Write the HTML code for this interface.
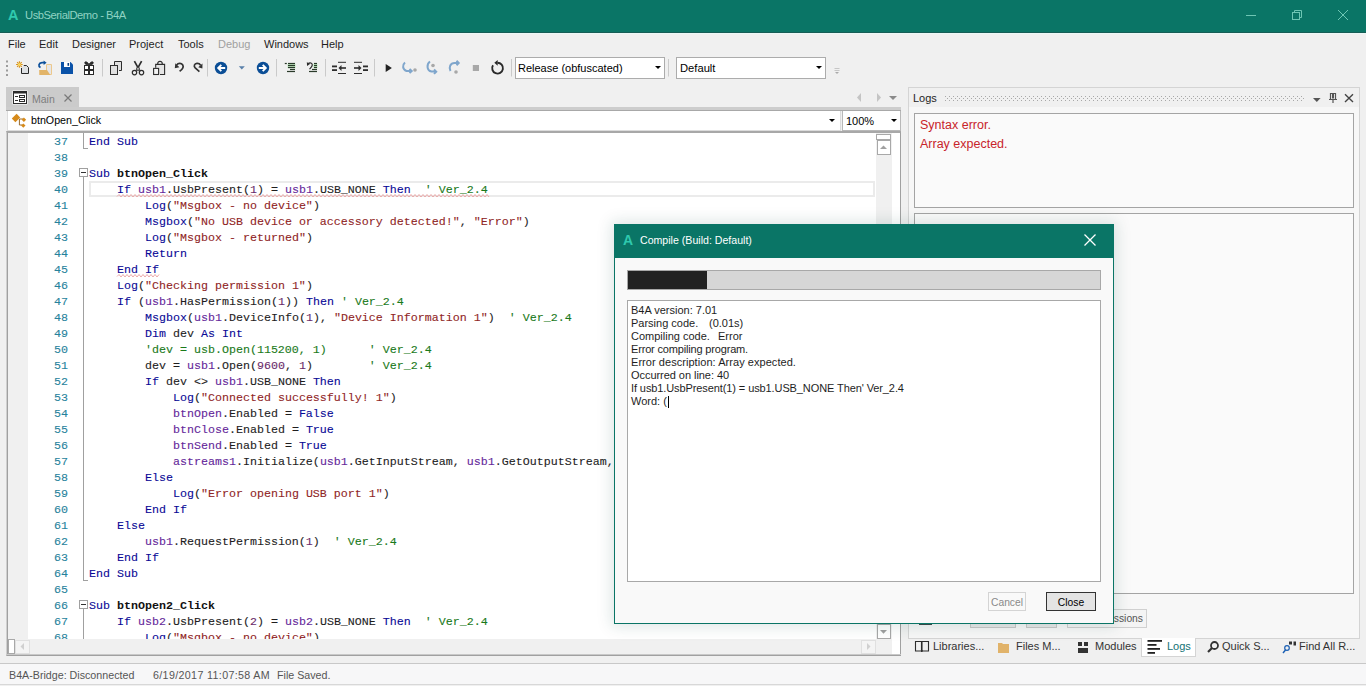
<!DOCTYPE html>
<html><head><meta charset="utf-8">
<style>
*{box-sizing:border-box;margin:0;padding:0}
html,body{width:1366px;height:686px;overflow:hidden;background:#f0f0f0;font-family:"Liberation Sans",sans-serif;font-size:11px;color:#1e1e1e}
.a{position:absolute;white-space:nowrap}
svg{position:absolute;overflow:visible}
.code{font-family:"Liberation Mono",monospace;font-size:11.67px;line-height:16px;white-space:pre;-webkit-text-stroke:0.1px}
.ln{position:absolute;left:28px;width:40px;text-align:right;color:#26829c}
.cl{position:absolute;left:89px}
.code i{font-style:normal}
.code b{font-weight:bold;color:#111;-webkit-text-stroke:0}
.k{color:#0a0a96}
.s{color:#902626}
.c{color:#1a7a1a}
.v{color:#64289a}
.n{color:#6a2a6a}
.menu{position:absolute;top:38px;font-size:11px;color:#1e1e1e}
.sep{position:absolute;width:1px;background:#c8c8c8}
.btab{position:absolute;top:640px;font-size:11px;color:#333}
.dl{position:absolute;left:631px;font-size:11px;line-height:13px;color:#1e1e1e;white-space:pre}
</style></head><body>
<!-- title bar -->
<div class="a" style="left:0;top:0;width:1366px;height:32px;background:#0a7566"></div><div class="a" style="left:0;top:32px;width:1366px;height:1px;background:#175d56"></div><div class="a" style="left:0;top:33px;width:1366px;height:1px;background:#ecf8f6"></div>
<div class="a" style="left:8px;top:7px;font-size:14.5px;font-weight:bold;color:#2fc9ae">A</div>
<div class="a" style="left:25px;top:9px;color:#8fd3c3;font-size:11.2px;letter-spacing:-0.45px">UsbSerialDemo - B4A</div>
<svg style="left:0;top:0" width="1366" height="33" viewBox="0 0 1366 33">
<g stroke="#6ec6b4" stroke-width="1" fill="none">
<path d="M1246 15.5h10"/>
<rect x="1292.5" y="12.5" width="7" height="7"/>
<path d="M1294.5 12.5v-2h7v7h-2"/>
<path d="M1338 10l10 10M1348 10l-10 10"/>
</g></svg>

<!-- menu -->
<div class="menu" style="left:8px">File</div>
<div class="menu" style="left:39px">Edit</div>
<div class="menu" style="left:72px">Designer</div>
<div class="menu" style="left:129px">Project</div>
<div class="menu" style="left:178px">Tools</div>
<div class="menu" style="left:218px;color:#a0a0a0">Debug</div>
<div class="menu" style="left:264px">Windows</div>
<div class="menu" style="left:321px">Help</div>

<!-- toolbar icons -->
<svg style="left:0;top:56px" width="900" height="26" viewBox="0 56 900 26">
<g fill="#9c9c9c"><rect x="6" y="60.5" width="2" height="2"/><rect x="6" y="65" width="2" height="2"/><rect x="6" y="69.5" width="2" height="2"/><rect x="6" y="74" width="2" height="2"/></g>
<!-- new -->
<g stroke="#d8901a" stroke-width="1.1"><path d="M19.4 61.2v6.6M16.1 64.5h6.6M17.1 62.2l4.6 4.6M21.7 62.2l-4.6 4.6"/></g>
<circle cx="19.4" cy="64.5" r="1.5" fill="#f8d860"/>
<path d="M23.8 65.5h2.7l2 2v6h-7v-5.5" fill="#dde0e3" stroke="#2a2a2a" stroke-width="1"/>
<path d="M22 68.5h2.5v-2.5" fill="none" stroke="#f0f0f0" stroke-width="0"/>
<!-- open -->
<path d="M46.5 64.5h5v10h-5z" fill="#e6e6e8" stroke="#ecc88c" stroke-width="1"/>
<path d="M39.2 70h7.8l3.3 5h-11z" fill="#e2b468"/>
<path d="M40.5 67.6c-2.5-1.5-2-4.6 1.5-4.9h2.2" stroke="#0b4f9a" stroke-width="1.7" fill="none"/>
<path d="M43.6 60.4l3 2.3-3 2.3z" fill="#0b4f9a"/>
<!-- save -->
<path d="M61 62h9.5l2.5 2.5v9.5h-12z" fill="#0a52a8"/>
<rect x="64" y="62" width="6" height="5" fill="#fff"/>
<rect x="67.5" y="63" width="1.6" height="2.8" fill="#0a3f80"/>
<!-- save all (gift) -->
<rect x="84" y="65" width="10" height="10" fill="#2a2a2a"/>
<g fill="#fff"><rect x="85" y="66" width="3" height="3"/><rect x="90" y="66" width="3" height="3"/><rect x="85" y="71" width="3" height="3"/><rect x="90" y="71" width="3" height="3"/></g>
<path d="M89 64.5c-1-2-2.5-3-3.8-2.6c-0.8 0.4-0.5 1.8 0.8 2.6zM89 64.5c1-2 2.5-3 3.8-2.6c0.8 0.4 0.5 1.8-0.8 2.6z" fill="#2a2a2a" stroke="#2a2a2a" stroke-width="0.8"/>
<rect x="102" y="59" width="1" height="17.5" fill="#cacaca"/>
<!-- copy -->
<path d="M114.5 65v-3.5h7v9h-2.5" fill="#e0e0e0" stroke="#2d2d2d" stroke-width="1"/>
<rect x="110.5" y="65.5" width="7" height="9" fill="#e0e0e0" stroke="#2d2d2d" stroke-width="1"/>
<!-- cut -->
<path d="M134.4 61.2L138 67.6M141.6 61.2L138 67.6" stroke="#2d2d2d" stroke-width="1.7" fill="none"/>
<path d="M136.8 67.6v3.2M139.2 67.6v3.2M135.5 70.3h5" stroke="#2d2d2d" stroke-width="1.1" fill="none"/>
<circle cx="134.5" cy="72.6" r="2.2" fill="none" stroke="#2d2d2d" stroke-width="1.2"/>
<circle cx="141.5" cy="72.6" r="2.2" fill="none" stroke="#2d2d2d" stroke-width="1.2"/>
<!-- paste -->
<path d="M155.7 67.8V64.4H164.6V74.5H160" fill="#e4e4e4" stroke="#2d2d2d" stroke-width="1.1"/>
<path d="M157.6 64.4c0-2 1-3 2.4-3s2.4 1 2.4 3z" fill="#fff" stroke="#2d2d2d" stroke-width="1.1"/>
<rect x="153.6" y="68.4" width="5" height="6.1" fill="#f4f4f4" stroke="#2d2d2d" stroke-width="1.1"/>
<!-- undo/redo -->
<path d="M179.6 71.3C182.2 69.6 184 67 182.6 64.8C181.2 62.7 178.2 62.9 176.6 65" stroke="#333" stroke-width="1.7" fill="none"/>
<path d="M174.8 68.3L175.3 63.3L179.4 67.3z" fill="#333"/>
<path d="M199.4 71.7L195.2 67.9C193.4 66 194.4 63.6 197 63.4C198.8 63.3 200 64.2 200.6 65.2" stroke="#333" stroke-width="1.7" fill="none"/>
<path d="M202.4 68.5L202.5 63.4L198.2 67.2z" fill="#333"/>
<rect x="207" y="59" width="1" height="17.5" fill="#cacaca"/>
<!-- back/fwd -->
<circle cx="221" cy="68" r="6.2" fill="#0b4e96"/>
<path d="M225.2 68h-6M221.3 64.9l-3.1 3.1 3.1 3.1" stroke="#fff" stroke-width="1.9" fill="none"/>
<path d="M238.8 66.2h6l-3 3.3z" fill="#5a80aa"/>
<circle cx="263" cy="68" r="6.2" fill="#0b4e96"/>
<path d="M258.8 68h6M262.7 64.9l3.1 3.1-3.1 3.1" stroke="#fff" stroke-width="1.9" fill="none"/>
<rect x="276" y="59" width="1" height="17.5" fill="#cacaca"/>
<!-- comment -->
<rect x="287.5" y="63.8" width="8" height="4.4" fill="#c4ecc4"/>
<g fill="#2a3a2a"><rect x="284.8" y="62.9" width="2" height="1.2"/><rect x="288" y="62.9" width="7" height="1.2"/><rect x="288" y="64.9" width="7" height="1.2"/><rect x="288" y="66.9" width="7" height="1.2"/><rect x="290" y="68.9" width="5" height="1.2"/><rect x="287" y="70.9" width="8" height="1.2"/></g>
<!-- uncomment -->
<rect x="313.3" y="63.8" width="4.2" height="4.4" fill="#c4ecc4"/>
<path d="M308.5 63.2c1.5-0.7 3.8-0.4 3.8 1.8c0 1.5-1.5 2.8-2.8 4.2" stroke="#2a2a2a" stroke-width="1.2" fill="none"/>
<path d="M306.8 62.2l0.3 3.8 3.2-2.2z" fill="#2a2a2a"/>
<g fill="#2a3a2a"><rect x="314" y="62.9" width="3" height="1.2"/><rect x="314" y="64.9" width="3" height="1.2"/><rect x="314" y="66.9" width="3" height="1.2"/><rect x="312" y="68.9" width="5" height="1.2"/><rect x="309" y="70.9" width="8" height="1.2"/></g>
<rect x="325" y="59" width="1" height="17.5" fill="#cacaca"/>
<!-- outdent/indent -->
<g fill="#2d2d2d">
<rect x="338" y="61.8" width="8" height="1"/><rect x="332" y="65.5" width="5" height="1.8"/><rect x="332" y="69.2" width="5" height="1.8"/><rect x="338" y="73" width="8" height="1"/>
<rect x="340" y="67.2" width="6" height="1.6"/><path d="M338.5 68l3-3v6z"/>
<rect x="354" y="61.8" width="8" height="1"/><rect x="363" y="65.5" width="5" height="1.8"/><rect x="363" y="69.2" width="5" height="1.8"/><rect x="354" y="73" width="8" height="1"/>
<rect x="354" y="67.2" width="6" height="1.6"/><path d="M361.5 68l-3-3v6z"/>
</g>
<rect x="374" y="59" width="1" height="17.5" fill="#cacaca"/>
<!-- play -->
<path d="M385.7 64v8l6.2-4z" fill="#222"/>
<!-- steps -->
<g stroke="#7fa6cc" stroke-width="2" fill="none">
<path d="M405 62.5c-3 2.5-2.5 7 1.5 8.5h4"/><path d="M409.5 69l2.2 2-2.2 2"/>
<path d="M430 61.5c-3.5 2.5-3.5 9 1.5 10h4"/><path d="M434 69.5l2.2 2.2-2.2 2.2"/>
<path d="M450.5 71c-2-4 0-8 4-8h4"/><path d="M456.5 60.8l2.2 2.2-2.2 2.2"/>
</g>
<g fill="#a8a8a8"><circle cx="415" cy="70" r="1.8"/><circle cx="433" cy="65.5" r="1.8"/><circle cx="456" cy="72" r="1.8"/></g>
<rect x="472.8" y="65" width="6.2" height="6" fill="#a8a8a8"/>
<!-- refresh -->
<path d="M497.5 62.8A5.4 5.4 0 1 1 493 65.3" stroke="#2a2a2a" stroke-width="1.9" fill="none"/>
<path d="M494.3 62.8l3.4-2.9v5.8z" fill="#2a2a2a"/>
<rect x="511" y="59" width="1" height="17.5" fill="#cacaca"/>
<rect x="668" y="59" width="1" height="17.5" fill="#cacaca"/>
<path d="M834.5 68.5h5M834.5 70.5h5" stroke="#bbb" stroke-width="0.8"/><path d="M835 72l2 2 2-2z" fill="#aaa"/>
</svg>
<!-- combos -->
<div class="a" style="left:515px;top:57px;width:150px;height:22px;background:#fff;border:1px solid #acacac"></div>
<div class="a" style="left:518px;top:62px;font-size:11px;color:#000">Release (obfuscated)</div>
<svg style="left:655px;top:66px" width="8" height="5"><path d="M0 0h6l-3 3z" fill="#000"/></svg>
<div class="a" style="left:676px;top:57px;width:150px;height:22px;background:#fff;border:1px solid #acacac"></div>
<div class="a" style="left:680px;top:62px;font-size:11.2px;color:#000">Default</div>
<svg style="left:816px;top:66px" width="8" height="5"><path d="M0 0h6l-3 3z" fill="#000"/></svg>
<!-- doc tab row -->
<div class="a" style="left:6px;top:87px;width:73px;height:21px;background:#cbcbcb"></div>
<svg style="left:12px;top:90px" width="17" height="16" viewBox="0 0 17 16">
<rect x="0.5" y="0.5" width="15" height="14" fill="#fff"/>
<rect x="1.5" y="1.5" width="13" height="12" fill="#fff" stroke="#2d2d2d" stroke-width="1"/>
<rect x="1.5" y="1.5" width="13" height="2" fill="#2d2d2d"/>
<g fill="#2d2d2d"><rect x="3" y="6" width="3" height="1"/><rect x="3" y="10" width="3" height="1"/></g>
<g fill="none" stroke="#2d2d2d" stroke-width="1"><rect x="7.5" y="5.5" width="5" height="2"/><rect x="7.5" y="9.5" width="5" height="2"/></g>
</svg>
<div class="a" style="left:32px;top:93px;font-size:10.5px;color:#7e7e7e">Main</div>
<svg style="left:64px;top:94px" width="9" height="9"><path d="M0.5 0.5l7 7M7.5 0.5l-7 7" stroke="#7a7a7a" stroke-width="1.2"/></svg>
<svg style="left:855px;top:92px" width="45" height="12">
<path d="M6 1v9l-4-4.5z" fill="#c4c4c4"/><path d="M22 1v9l4-4.5z" fill="#c4c4c4"/><path d="M34 4h8l-4 4z" fill="#8a8a8a"/>
</svg>
<div class="a" style="left:6px;top:107px;width:895px;height:3px;background:#cdcdcd"></div><div class="a" style="left:6px;top:110px;width:895px;height:1px;background:#a8a8a8"></div>
<!-- dropdowns -->
<div class="a" style="left:7px;top:111px;width:834px;height:20px;background:#fff;border:1px solid #dcdcdc;border-top:none"></div>
<svg style="left:8px;top:110px" width="22" height="21" viewBox="8 110 22 21">
<path d="M19.4 119h4M19.4 119v6h3" stroke="#9a6a2a" stroke-width="1" fill="none"/>
<path d="M11.8 118.6L16.6 113.8L20.2 117.4L15.4 122.2z" fill="#d68a1a"/>
<path d="M23.9 117.6l2.2 2.2-2.2 2.2-2.2-2.2z" fill="#d68a1a"/>
<path d="M23.3 123.4l2.2 2.2-2.2 2.2-2.2-2.2z" fill="#d68a1a"/>
</svg>
<div class="a" style="left:31px;top:114px;font-size:10.7px;color:#000">btnOpen_Click</div>
<svg style="left:829px;top:119px" width="8" height="5"><path d="M0 0h6l-3 3z" fill="#000"/></svg>
<div class="a" style="left:842px;top:111px;width:59px;height:20px;background:#fff;border:1px solid #b8b8b8;border-top:none"></div>
<div class="a" style="left:846px;top:115px;font-size:11px;color:#000">100%</div>
<svg style="left:891px;top:119px" width="8" height="5"><path d="M0 0h6l-3 3z" fill="#000"/></svg>

<!-- code area frame -->
<div class="a" style="left:6px;top:131px;width:895px;height:525px;background:#fff;border-top:2px solid #a8a8a8;border-left:1px solid #cfcfcf;border-right:1px solid #a0a0a0;border-bottom:1px solid #a0a0a0"></div><div class="a" style="left:7px;top:133px;width:1px;height:522px;background:#a0a0a0"></div><div class="a" style="left:6px;top:654px;width:895px;height:1px;background:#c8c8c8"></div>
<div class="a" style="left:8px;top:133px;width:20px;height:506px;background:#f0f0f0"></div>
<!-- current line box -->
<div class="a" style="left:89px;top:181px;width:786px;height:16px;border:2px solid #ebebeb"></div>
<!-- fold lines -->
<div class="a" style="left:83px;top:133px;width:1px;height:16px;background:#a0a0a0"></div>
<div class="a" style="left:83px;top:148px;width:5px;height:1px;background:#a0a0a0"></div>
<div class="a" style="left:79px;top:168px;width:9px;height:9px;border:1px solid #a0a0a0;background:#fff"></div>
<div class="a" style="left:81px;top:172px;width:5px;height:1px;background:#333"></div>
<div class="a" style="left:83px;top:177px;width:1px;height:404px;background:#a0a0a0"></div>
<div class="a" style="left:83px;top:580px;width:5px;height:1px;background:#a0a0a0"></div>
<div class="a" style="left:79px;top:600px;width:9px;height:9px;border:1px solid #a0a0a0;background:#fff"></div>
<div class="a" style="left:81px;top:604px;width:5px;height:1px;background:#333"></div>
<div class="a" style="left:83px;top:609px;width:1px;height:30px;background:#a0a0a0"></div>
<!-- squiggles -->
<svg style="left:117px;top:194px" width="372" height="4"><path d="M0 2.5 L2.0 0.5 L4.0 3.0 L6.0 0.5 L8.0 3.0 L10.0 0.5 L12.0 3.0 L14.0 0.5 L16.0 3.0 L18.0 0.5 L20.0 3.0 L22.0 0.5 L24.0 3.0 L26.0 0.5 L28.0 3.0 L30.0 0.5 L32.0 3.0 L34.0 0.5 L36.0 3.0 L38.0 0.5 L40.0 3.0 L42.0 0.5 L44.0 3.0 L46.0 0.5 L48.0 3.0 L50.0 0.5 L52.0 3.0 L54.0 0.5 L56.0 3.0 L58.0 0.5 L60.0 3.0 L62.0 0.5 L64.0 3.0 L66.0 0.5 L68.0 3.0 L70.0 0.5 L72.0 3.0 L74.0 0.5 L76.0 3.0 L78.0 0.5 L80.0 3.0 L82.0 0.5 L84.0 3.0 L86.0 0.5 L88.0 3.0 L90.0 0.5 L92.0 3.0 L94.0 0.5 L96.0 3.0 L98.0 0.5 L100.0 3.0 L102.0 0.5 L104.0 3.0 L106.0 0.5 L108.0 3.0 L110.0 0.5 L112.0 3.0 L114.0 0.5 L116.0 3.0 L118.0 0.5 L120.0 3.0 L122.0 0.5 L124.0 3.0 L126.0 0.5 L128.0 3.0 L130.0 0.5 L132.0 3.0 L134.0 0.5 L136.0 3.0 L138.0 0.5 L140.0 3.0 L142.0 0.5 L144.0 3.0 L146.0 0.5 L148.0 3.0 L150.0 0.5 L152.0 3.0 L154.0 0.5 L156.0 3.0 L158.0 0.5 L160.0 3.0 L162.0 0.5 L164.0 3.0 L166.0 0.5 L168.0 3.0 L170.0 0.5 L172.0 3.0 L174.0 0.5 L176.0 3.0 L178.0 0.5 L180.0 3.0 L182.0 0.5 L184.0 3.0 L186.0 0.5 L188.0 3.0 L190.0 0.5 L192.0 3.0 L194.0 0.5 L196.0 3.0 L198.0 0.5 L200.0 3.0 L202.0 0.5 L204.0 3.0 L206.0 0.5 L208.0 3.0 L210.0 0.5 L212.0 3.0 L214.0 0.5 L216.0 3.0 L218.0 0.5 L220.0 3.0 L222.0 0.5 L224.0 3.0 L226.0 0.5 L228.0 3.0 L230.0 0.5 L232.0 3.0 L234.0 0.5 L236.0 3.0 L238.0 0.5 L240.0 3.0 L242.0 0.5 L244.0 3.0 L246.0 0.5 L248.0 3.0 L250.0 0.5 L252.0 3.0 L254.0 0.5 L256.0 3.0 L258.0 0.5 L260.0 3.0 L262.0 0.5 L264.0 3.0 L266.0 0.5 L268.0 3.0 L270.0 0.5 L272.0 3.0 L274.0 0.5 L276.0 3.0 L278.0 0.5 L280.0 3.0 L282.0 0.5 L284.0 3.0 L286.0 0.5 L288.0 3.0 L290.0 0.5 L292.0 3.0 L294.0 0.5 L296.0 3.0 L298.0 0.5 L300.0 3.0 L302.0 0.5 L304.0 3.0 L306.0 0.5 L308.0 3.0 L310.0 0.5 L312.0 3.0 L314.0 0.5 L316.0 3.0 L318.0 0.5 L320.0 3.0 L322.0 0.5 L324.0 3.0 L326.0 0.5 L328.0 3.0 L330.0 0.5 L332.0 3.0 L334.0 0.5 L336.0 3.0 L338.0 0.5 L340.0 3.0 L342.0 0.5 L344.0 3.0 L346.0 0.5 L348.0 3.0 L350.0 0.5 L352.0 3.0 L354.0 0.5 L356.0 3.0 L358.0 0.5 L360.0 3.0 L362.0 0.5 L364.0 3.0 L366.0 0.5 L368.0 3.0 L370.0 0.5 L372.0 3.0" stroke="#eaa0a0" stroke-width="0.9" fill="none"/></svg>
<svg style="left:117px;top:274px" width="42" height="4"><path d="M0 2.5 L2.0 0.5 L4.0 3.0 L6.0 0.5 L8.0 3.0 L10.0 0.5 L12.0 3.0 L14.0 0.5 L16.0 3.0 L18.0 0.5 L20.0 3.0 L22.0 0.5 L24.0 3.0 L26.0 0.5 L28.0 3.0 L30.0 0.5 L32.0 3.0 L34.0 0.5 L36.0 3.0 L38.0 0.5 L40.0 3.0 L42.0 0.5" stroke="#eaa0a0" stroke-width="0.9" fill="none"/></svg>
<div class="code a" style="left:0;top:0;width:876px;height:639px;overflow:hidden">
<div class="ln" style="top:134px">37</div><div class="cl" style="top:134px"><i class="k">End</i> <i class="k">Sub</i></div>
<div class="ln" style="top:150px">38</div><div class="cl" style="top:150px"></div>
<div class="ln" style="top:166px">39</div><div class="cl" style="top:166px"><i class="k">Sub</i> <b>btnOpen_Click</b></div>
<div class="ln" style="top:182px">40</div><div class="cl" style="top:182px">    <i class="k">If</i> <i class="v">usb1</i>.UsbPresent(<i class="n">1</i>) = <i class="v">usb1</i>.USB_NONE <i class="k">Then</i>  <i class="c">&#x27; Ver_2.4</i></div>
<div class="ln" style="top:198px">41</div><div class="cl" style="top:198px">        <i class="k">Log</i>(<i class="s">&quot;Msgbox - no device&quot;</i>)</div>
<div class="ln" style="top:214px">42</div><div class="cl" style="top:214px">        <i class="k">Msgbox</i>(<i class="s">&quot;No USB device or accessory detected!&quot;</i>, <i class="s">&quot;Error&quot;</i>)</div>
<div class="ln" style="top:230px">43</div><div class="cl" style="top:230px">        <i class="k">Log</i>(<i class="s">&quot;Msgbox - returned&quot;</i>)</div>
<div class="ln" style="top:246px">44</div><div class="cl" style="top:246px">        <i class="k">Return</i></div>
<div class="ln" style="top:262px">45</div><div class="cl" style="top:262px">    <i class="k">End</i> <i class="k">If</i></div>
<div class="ln" style="top:278px">46</div><div class="cl" style="top:278px">    <i class="k">Log</i>(<i class="s">&quot;Checking permission 1&quot;</i>)</div>
<div class="ln" style="top:294px">47</div><div class="cl" style="top:294px">    <i class="k">If</i> (<i class="v">usb1</i>.HasPermission(<i class="n">1</i>)) <i class="k">Then</i> <i class="c">&#x27; Ver_2.4</i></div>
<div class="ln" style="top:310px">48</div><div class="cl" style="top:310px">        <i class="k">Msgbox</i>(<i class="v">usb1</i>.DeviceInfo(<i class="n">1</i>), <i class="s">&quot;Device Information 1&quot;</i>)  <i class="c">&#x27; Ver_2.4</i></div>
<div class="ln" style="top:326px">49</div><div class="cl" style="top:326px">        <i class="k">Dim</i> dev <i class="k">As</i> <i class="k">Int</i></div>
<div class="ln" style="top:342px">50</div><div class="cl" style="top:342px">        <i class="c">&#x27;dev = usb.Open(115200, 1)      &#x27; Ver_2.4</i></div>
<div class="ln" style="top:358px">51</div><div class="cl" style="top:358px">        dev = <i class="v">usb1</i>.Open(<i class="n">9600</i>, <i class="n">1</i>)        <i class="c">&#x27; Ver_2.4</i></div>
<div class="ln" style="top:374px">52</div><div class="cl" style="top:374px">        <i class="k">If</i> dev &lt;&gt; <i class="v">usb1</i>.USB_NONE <i class="k">Then</i></div>
<div class="ln" style="top:390px">53</div><div class="cl" style="top:390px">            <i class="k">Log</i>(<i class="s">&quot;Connected successfully! 1&quot;</i>)</div>
<div class="ln" style="top:406px">54</div><div class="cl" style="top:406px">            <i class="v">btnOpen</i>.Enabled = <i class="k">False</i></div>
<div class="ln" style="top:422px">55</div><div class="cl" style="top:422px">            <i class="v">btnClose</i>.Enabled = <i class="k">True</i></div>
<div class="ln" style="top:438px">56</div><div class="cl" style="top:438px">            <i class="v">btnSend</i>.Enabled = <i class="k">True</i></div>
<div class="ln" style="top:454px">57</div><div class="cl" style="top:454px">            <i class="v">astreams1</i>.Initialize(<i class="v">usb1</i>.GetInputStream, <i class="v">usb1</i>.GetOutputStream, <i class="s">&quot;astreams1&quot;</i>)</div>
<div class="ln" style="top:470px">58</div><div class="cl" style="top:470px">        <i class="k">Else</i></div>
<div class="ln" style="top:486px">59</div><div class="cl" style="top:486px">            <i class="k">Log</i>(<i class="s">&quot;Error opening USB port 1&quot;</i>)</div>
<div class="ln" style="top:502px">60</div><div class="cl" style="top:502px">        <i class="k">End</i> <i class="k">If</i></div>
<div class="ln" style="top:518px">61</div><div class="cl" style="top:518px">    <i class="k">Else</i></div>
<div class="ln" style="top:534px">62</div><div class="cl" style="top:534px">        <i class="v">usb1</i>.RequestPermission(<i class="n">1</i>)  <i class="c">&#x27; Ver_2.4</i></div>
<div class="ln" style="top:550px">63</div><div class="cl" style="top:550px">    <i class="k">End</i> <i class="k">If</i></div>
<div class="ln" style="top:566px">64</div><div class="cl" style="top:566px"><i class="k">End</i> <i class="k">Sub</i></div>
<div class="ln" style="top:582px">65</div><div class="cl" style="top:582px"></div>
<div class="ln" style="top:598px">66</div><div class="cl" style="top:598px"><i class="k">Sub</i> <b>btnOpen2_Click</b></div>
<div class="ln" style="top:614px">67</div><div class="cl" style="top:614px">    <i class="k">If</i> <i class="v">usb2</i>.UsbPresent(<i class="n">2</i>) = <i class="v">usb2</i>.USB_NONE <i class="k">Then</i>  <i class="c">&#x27; Ver_2.4</i></div>
<div class="ln" style="top:630px">68</div><div class="cl" style="top:630px">        <i class="k">Log</i>(<i class="s">&quot;Msgbox - no device&quot;</i>)</div>
</div>
<!-- scrollbars -->
<div class="a" style="left:876px;top:133px;width:16px;height:506px;background:#f0f0f0"></div>
<div class="a" style="left:876px;top:134px;width:15px;height:6px;background:#fff;border:1px solid #a8a8a8"></div>
<div class="a" style="left:877px;top:140px;width:14px;height:15px;background:#fff;border:1px solid #a8a8a8"></div>
<svg style="left:880px;top:145px" width="8" height="5"><path d="M0 4h7l-3.5-3.5z" fill="#a0a0a0"/></svg>
<div class="a" style="left:877px;top:624px;width:14px;height:15px;background:#fff;border:1px solid #a8a8a8"></div>
<svg style="left:880px;top:630px" width="8" height="5"><path d="M0 0h7l-3.5 3.7z" fill="#a0a0a0"/></svg>
<div class="a" style="left:8px;top:639px;width:884px;height:15px;background:#f0f0f0"></div>
<div class="a" style="left:8px;top:639px;width:7px;height:15px;background:#fff;border:1px solid #a8a8a8"></div>
<div class="a" style="left:15px;top:640px;width:15px;height:14px;background:#f4f4f4;border:1px solid #e0e0e0"></div>
<svg style="left:20px;top:643px" width="5" height="8"><path d="M4 0v7l-3.5-3.5z" fill="#d0d0d0"/></svg>
<div class="a" style="left:861px;top:640px;width:15px;height:14px;background:#f4f4f4;border:1px solid #e0e0e0"></div>
<svg style="left:867px;top:643px" width="5" height="8"><path d="M0 0v7l3.5-3.5z" fill="#d0d0d0"/></svg>

<!-- logs panel -->
<div class="a" style="left:908px;top:87px;width:452px;height:552px;background:#f7f7f7;border:1px solid #d4d4d4;border-bottom:none"></div>
<div class="a" style="left:909px;top:88px;width:450px;height:19px;background:#f0f0f0"></div>
<div class="a" style="left:913px;top:92px;font-size:11px;color:#1e1e1e">Logs</div>
<svg style="left:940px;top:94px" width="420" height="12" viewBox="940 94 420 12">
<defs><pattern id="dots" x="945" y="96" width="4" height="4" patternUnits="userSpaceOnUse"><rect x="0" y="0" width="1" height="1" fill="#a8a8a8"/><rect x="2" y="2" width="1" height="1" fill="#a8a8a8"/></pattern></defs>
<rect x="945" y="96" width="359" height="5" fill="url(#dots)"/>
<path d="M1313 98h7.6l-3.8 4z" fill="#555"/>
<path d="M1330.5 93.5h5v6h-5z" fill="none" stroke="#555" stroke-width="1.2"/><path d="M1333 93.5v5" stroke="#555" stroke-width="2"/><path d="M1329 99.5h8M1333 99.5v3.5" stroke="#555" stroke-width="1.2"/>
<path d="M1345 94.3l8 7.6M1353 94.3l-8 7.6" stroke="#444" stroke-width="1.4"/>
</svg>
<div class="a" style="left:914px;top:113px;width:440px;height:95px;background:#fafafa;border:1px solid #a4a4a4"></div>
<div class="a" style="left:920px;top:118px;font-size:12.5px;color:#c8242a">Syntax error.</div>
<div class="a" style="left:920px;top:137px;font-size:12.5px;color:#c8242a">Array expected.</div>
<div class="a" style="left:914px;top:213px;width:440px;height:381px;background:#fafafa;border:1px solid #a4a4a4"></div>
<div class="a" style="left:919px;top:623px;width:13px;height:2px;background:#3a4a48"></div>
<div class="a" style="left:970px;top:609px;width:46px;height:19px;background:#e8e8e8;border:1px solid #c8c8c8"></div>
<div class="a" style="left:1026px;top:609px;width:31px;height:19px;background:#e8e8e8;border:1px solid #c8c8c8"></div>
<div class="a" style="left:1067px;top:609px;width:80px;height:19px;background:#f4f4f4;border:1px solid #d0d0d0"></div>
<div class="a" style="right:223px;top:613px;font-size:10.3px;color:#555">Permissions</div>
<div class="a" style="left:908px;top:638px;width:452px;height:1px;background:#d4d4d4"></div>

<!-- bottom tabs -->
<div class="a" style="left:1141px;top:638px;width:55px;height:19px;background:#fff;border:1px solid #d4d4d4;border-top:none"></div>
<svg style="left:912px;top:638px" width="450" height="20" viewBox="912 638 450 20">
<path d="M915.5 641.5h6v9.5h-6zM922 641.5h6.5v9.5H922z" fill="none" stroke="#2d2d2d" stroke-width="1.1"/><path d="M921.8 650v2" stroke="#2d2d2d" stroke-width="1.5"/>
<path d="M998 643h4l1 1h6v9h-11z" fill="#e1b36a"/>
<rect x="1078" y="642" width="4" height="4" fill="#333"/><rect x="1084" y="642" width="4" height="4" fill="#333"/><rect x="1078" y="648" width="10" height="5" fill="#333"/>
<g fill="#222"><rect x="1147.5" y="640" width="14.5" height="1.8"/><rect x="1147.5" y="644" width="9" height="1.8"/><rect x="1147.5" y="648" width="12.5" height="1.8"/><rect x="1147.5" y="652" width="7.5" height="1.8"/></g>
<circle cx="1214.5" cy="645.5" r="3.5" fill="none" stroke="#333" stroke-width="1.8"/><path d="M1212 648l-4 4" stroke="#333" stroke-width="2.2"/>
<rect x="1289" y="641.5" width="3" height="3" fill="#333"/><rect x="1293.5" y="641.5" width="2.5" height="4" fill="#333"/>
<circle cx="1287" cy="648" r="2.3" fill="none" stroke="#1a5fb4" stroke-width="1.2"/><path d="M1285.5 650l-2.5 3" stroke="#1a5fb4" stroke-width="1.4"/>
</svg>
<div class="btab" style="left:933px">Libraries...</div>
<div class="btab" style="left:1016px">Files M...</div>
<div class="btab" style="left:1095px">Modules</div>
<div class="btab" style="left:1167px;color:#137274">Logs</div>
<div class="btab" style="left:1222px">Quick S...</div>
<div class="btab" style="left:1299px">Find All R...</div>

<!-- status -->
<div class="a" style="left:0;top:663px;width:1366px;height:22px;background:#f7f7f8;border-top:1px solid #c8c8c8;border-bottom:1px solid #d8d8d8"></div>
<div class="a" style="left:9px;top:669px;font-size:10.7px;color:#555">B4A-Bridge: Disconnected</div>
<div class="a" style="left:153px;top:669px;font-size:10.7px;color:#555;letter-spacing:0.35px">6/19/2017 11:07:58 AM</div>
<div class="a" style="left:277px;top:669px;font-size:10.7px;color:#555">File Saved.</div>

<!-- dialog -->
<div class="a" style="left:614px;top:224px;width:500px;height:400px;background:#f9f9f9;border:1px solid #0a7566;box-shadow:0 0 14px 3px rgba(0,70,60,0.13)"></div>
<div class="a" style="left:614px;top:224px;width:500px;height:34px;background:#0a7566"></div>
<div class="a" style="left:623px;top:232px;font-size:14px;font-weight:bold;color:#2fc9ae">A</div>
<div class="a" style="left:640px;top:234px;font-size:10.6px;color:#fff">Compile (Build: Default)</div>
<svg style="left:1084px;top:234px" width="12" height="12"><path d="M0.5 0.5l11 11M11.5 0.5l-11 11" stroke="#fff" stroke-width="1.3"/></svg>
<div class="a" style="left:627px;top:270px;width:474px;height:20px;background:#d6d6d6;border:1px solid #a8a8a8"></div>
<div class="a" style="left:628px;top:271px;width:79px;height:18px;background:#222"></div>
<div class="a" style="left:627px;top:300px;width:474px;height:282px;background:#fff;border:1px solid #a8a8a8"></div>
<div class="dl" style="top:304px">B4A version: 7.01</div>
<div class="dl" style="top:317px">Parsing code.</div><div class="dl" style="top:317px;left:709px">(0.01s)</div>
<div class="dl" style="top:330px">Compiling code.</div><div class="dl" style="top:330px;left:718px">Error</div>
<div class="dl" style="top:343px;letter-spacing:-0.17px">Error compiling program.</div>
<div class="dl" style="top:356px;letter-spacing:0.05px">Error description: Array expected.</div>
<div class="dl" style="top:369px;letter-spacing:-0.05px">Occurred on line: 40</div>
<div class="dl" style="top:382px;letter-spacing:-0.1px">If usb1.UsbPresent(1) = usb1.USB_NONE Then' Ver_2.4</div>
<div class="dl" style="top:395px">Word: (</div>
<div class="a" style="left:668px;top:396px;width:1px;height:12px;background:#000"></div>
<div class="a" style="left:988px;top:592px;width:38px;height:19px;border:1px solid #d4d4d4;background:#f9f9f9;color:#8a8a8a;text-align:center;line-height:19px;font-size:10.3px">Cancel</div>
<div class="a" style="left:1046px;top:592px;width:50px;height:19px;border:1px solid #333;background:#e4e4e4;color:#000;text-align:center;line-height:19px;font-size:10.3px">Close</div>
</body></html>
